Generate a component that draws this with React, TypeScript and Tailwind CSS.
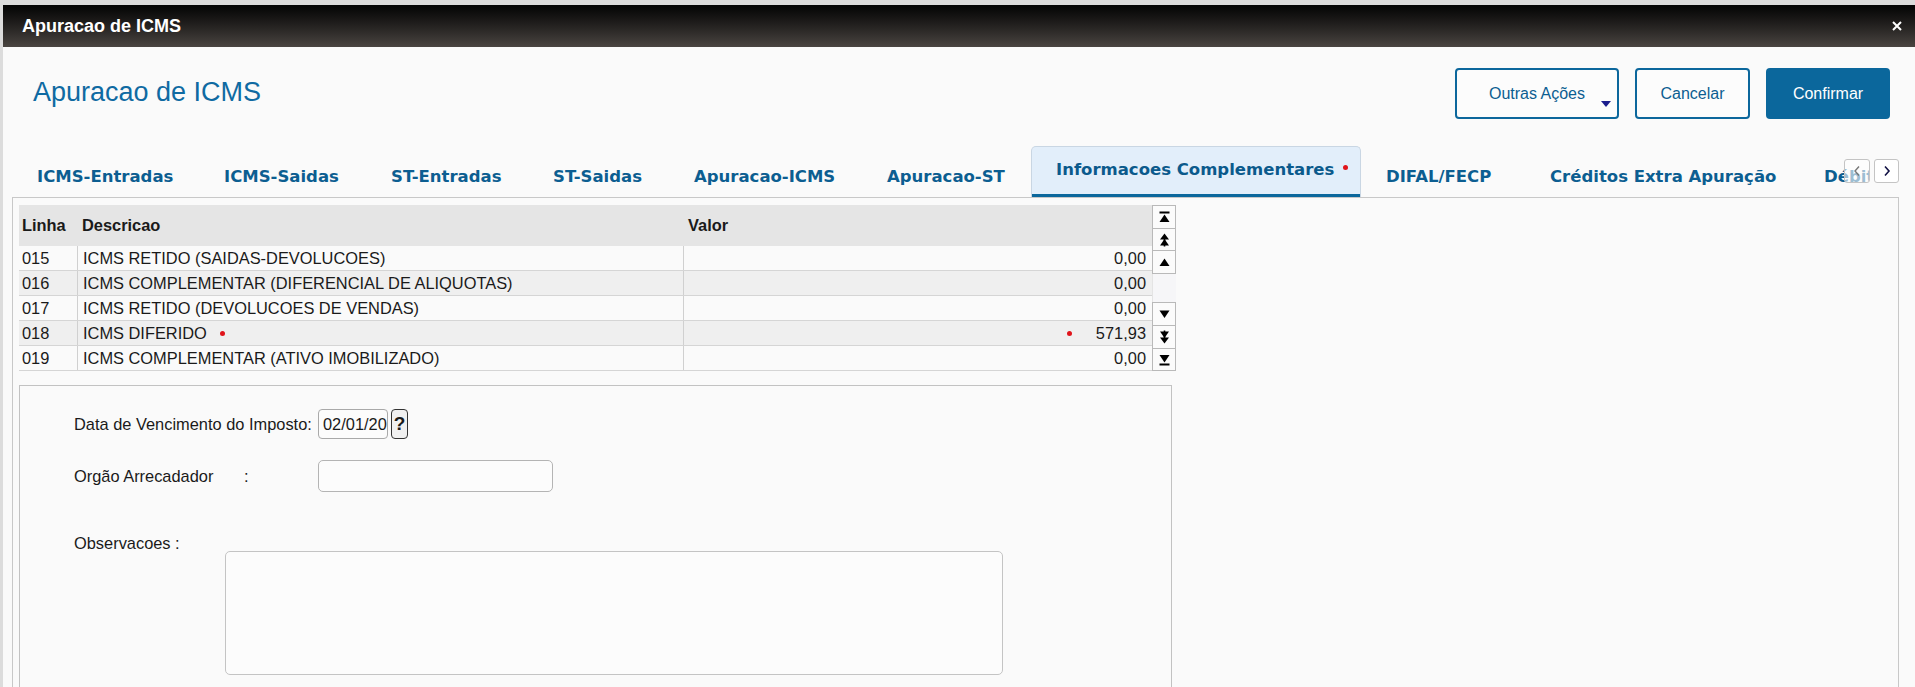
import React from "react";

const tabs = [
  { label: "ICMS-Entradas", w: "w-[187px]" },
  { label: "ICMS-Saidas", w: "w-[167px]" },
  { label: "ST-Entradas", w: "w-[162px]" },
  { label: "ST-Saidas", w: "w-[141px]" },
  { label: "Apuracao-ICMS", w: "w-[193px]" },
  { label: "Apuracao-ST", w: "w-[169px]" },
  { label: "Informacoes Complementares", w: "w-[330px]", active: true },
  { label: "DIFAL/FECP", w: "w-[164px]" },
  { label: "Créditos Extra Apuração", w: "w-[274px]" },
  { label: "Débitos Extra Apuração", w: "w-[260px]" },
];

const rows = [
  { linha: "015", desc: "ICMS RETIDO (SAIDAS-DEVOLUCOES)", valor: "0,00" },
  { linha: "016", desc: "ICMS COMPLEMENTAR (DIFERENCIAL DE ALIQUOTAS)", valor: "0,00" },
  { linha: "017", desc: "ICMS RETIDO (DEVOLUCOES DE VENDAS)", valor: "0,00" },
  { linha: "018", desc: "ICMS DIFERIDO", valor: "571,93", mark: true },
  { linha: "019", desc: "ICMS COMPLEMENTAR (ATIVO IMOBILIZADO)", valor: "0,00" },
];

function RedDot() {
  return <span className="inline-block w-[5px] h-[5px] rounded-full bg-[#e0141b]" />;
}

function ScrollIcon({ kind }: { kind: string }) {
  return (
    <svg width="11" height="14" viewBox="0 0 11 14" fill="#000">
      {kind === "first" && (
        <>
          <rect x="0.5" y="1.5" width="10" height="2" />
          <path d="M5.5 4.5 L10.5 12 H0.5 Z" />
        </>
      )}
      {kind === "pgup" && (
        <>
          <path d="M5.5 0.5 L10 6.5 H1 Z" />
          <path d="M5.5 6 L10 12.5 H1 Z" />
          <rect x="4.7" y="6" width="1.6" height="7.5" />
        </>
      )}
      {kind === "up" && <path d="M5.5 3.5 L10.5 11 H0.5 Z" />}
      {kind === "down" && <path d="M5.5 11 L10.5 3.5 H0.5 Z" />}
      {kind === "pgdn" && (
        <>
          <path d="M5.5 13.5 L10 7.5 H1 Z" />
          <path d="M5.5 8 L10 1.5 H1 Z" />
          <rect x="4.7" y="0.5" width="1.6" height="7.5" />
        </>
      )}
      {kind === "last" && (
        <>
          <path d="M5.5 9.5 L10.5 2 H0.5 Z" />
          <rect x="0.5" y="10.5" width="10" height="2" />
        </>
      )}
    </svg>
  );
}

function ScrollBtn({ kind, h }: { kind: string; h: string }) {
  return (
    <div className={`${h} flex items-center justify-center border border-[#b9b9b9] bg-[#fbfbfb] -mt-px first:mt-0`}>
      <ScrollIcon kind={kind} />
    </div>
  );
}

export default function App() {
  return (
    <div className="w-[1915px] h-[687px] overflow-hidden bg-[#dcdcdc] pt-[5px] pl-[3px] font-['Liberation_Sans',Arial,sans-serif] text-[#1a1a1a]">
      <div className="h-full flex flex-col bg-[#fafafa]">
        {/* title bar */}
        <div className="h-[42px] shrink-0 flex items-center justify-between bg-gradient-to-b from-[#050505] to-[#4a4541] pl-[19px] pr-[13px]">
          <span className="text-white font-bold text-[18px] leading-none">Apuracao de ICMS</span>
          <svg width="10" height="10" viewBox="0 0 10 10" stroke="#fff" strokeWidth="2">
            <path d="M1 1 L9 9 M9 1 L1 9" />
          </svg>
        </div>

        {/* header */}
        <div className="h-[99px] shrink-0 flex justify-between items-start pt-[21px] pl-[30px] pr-[25px]">
          <h1 className="mt-[9px] text-[27px] leading-[30px] text-[#0f6aa2]">Apuracao de ICMS</h1>
          <div className="flex gap-[16px] text-[16px]">
            <button className="relative w-[164px] h-[51px] rounded-[4px] border-2 border-[#0c679c] text-[#0c5e91] bg-[#fcfcfc]">
              Outras Ações
              <svg className="absolute right-[6px] bottom-[9px]" width="10" height="7" viewBox="0 0 10 7">
                <path d="M0 0 H10 L5 6 Z" fill="#1b1e8e" />
              </svg>
            </button>
            <button className="w-[115px] h-[51px] rounded-[4px] border-2 border-[#0c679c] text-[#0c5e91] bg-[#fcfcfc]">
              Cancelar
            </button>
            <button className="w-[124px] h-[51px] rounded-[4px] bg-[#0b679c] text-white">Confirmar</button>
          </div>
        </div>

        {/* tabs */}
        <div className="h-[51px] shrink-0 relative ml-[9px] mr-[16px]">
          <div className="flex h-full w-[1857px] overflow-hidden font-['DejaVu_Sans',Verdana,sans-serif] font-bold text-[16.5px] text-[#0c5e91]">
            {tabs.map((t) =>
              t.active ? (
                <div
                  key={t.label}
                  className={`${t.w} shrink-0 h-full flex items-center pl-[24px] pb-[4px] rounded-t-[5px] border border-b-0 border-[#c9d6e3] bg-[#e2eefa] shadow-[inset_0_-3px_0_#0b679c] text-[#0b5a8c]`}
                >
                  {t.label}
                  <span className="ml-[9px] -mt-[10px]">
                    <RedDot />
                  </span>
                </div>
              ) : (
                <div key={t.label} className={`${t.w} shrink-0 h-full flex items-center pl-[25px] pt-[11px] whitespace-nowrap`}>
                  {t.label}
                </div>
              )
            )}
          </div>
          <div className="absolute right-0 top-[13px] flex gap-[4px]">
            <div className="w-[26px] h-[24px] rounded-[3px] border border-[#c4c4c4] bg-white/60 flex items-center justify-center">
              <svg width="8" height="12" viewBox="0 0 8 12" fill="none" stroke="#777" strokeWidth="1.4">
                <path d="M6 1.5 L2 6 L6 10.5" />
              </svg>
            </div>
            <div className="w-[25px] h-[24px] rounded-[3px] border border-[#c4c4c4] bg-white flex items-center justify-center">
              <svg width="8" height="12" viewBox="0 0 8 12" fill="none" stroke="#111144" strokeWidth="1.6">
                <path d="M2 1.5 L6 6 L2 10.5" />
              </svg>
            </div>
          </div>
        </div>

        {/* panel */}
        <div className="flex-1 ml-[9px] mr-[16px] border-x border-t border-[#c8c8c8] pl-[6px] pt-[7px]">
          <div className="flex text-[16.4px]">
            <div className="w-[1133px]">
              <div className="h-[41px] flex items-center bg-[#e5e5e5] font-bold">
                <div className="w-[58px] pl-[3px]">Linha</div>
                <div className="w-[606px] pl-[5px]">Descricao</div>
                <div className="flex-1 pl-[5px]">Valor</div>
              </div>
              {rows.map((r, i) => (
                <div
                  key={r.linha}
                  className={`h-[25px] flex border-b border-[#d5d5d5] ${i % 2 === 1 ? "bg-[#efefef]" : "bg-[#fafafa]"}`}
                >
                  <div className="w-[58px] pl-[3px] flex items-center">{r.linha}</div>
                  <div className="w-[606px] pl-[5px] flex items-center border-l border-[#d0d0d0]">
                    {r.desc}
                    {r.mark && (
                      <span className="ml-[13px] flex">
                        <RedDot />
                      </span>
                    )}
                  </div>
                  <div className="flex-1 pr-[6px] flex items-center justify-end border-l border-[#d0d0d0]">
                    {r.mark && (
                      <span className="mr-[24px] flex">
                        <RedDot />
                      </span>
                    )}
                    {r.valor}
                  </div>
                </div>
              ))}
            </div>
            <div className="w-[24px] flex flex-col h-[166px]">
              <ScrollBtn kind="first" h="h-[24px]" />
              <ScrollBtn kind="pgup" h="h-[23px]" />
              <ScrollBtn kind="up" h="h-[24px]" />
              <div className="flex-1 bg-[#f6f6f8] border-l border-[#e4e4e4]" />
              <ScrollBtn kind="down" h="h-[24px]" />
              <ScrollBtn kind="pgdn" h="h-[24px]" />
              <ScrollBtn kind="last" h="h-[23px]" />
            </div>
          </div>

          {/* form */}
          <div className="mt-[14px] w-[1153px] h-[400px] border border-[#c2c2c2] pl-[54px] pt-[23px] text-[16.4px]">
            <div className="flex items-center h-[30px]">
              <span className="w-[244px] shrink-0">Data de Vencimento do Imposto:</span>
              <div className="w-[70px] h-[30px] rounded-[4px] border border-[#a9a9a9] bg-[#fcfcfc] pl-[4px] overflow-hidden whitespace-nowrap flex items-center">
                02/01/2024
              </div>
              <div className="ml-[3px] w-[17px] h-[30px] rounded-[4px] border border-[#333] bg-[#f0f0f0] flex items-center justify-center font-bold text-[19px]">
                ?
              </div>
            </div>
            <div className="flex items-center h-[32px] mt-[21px]">
              <span className="w-[170px] shrink-0">Orgão Arrecadador</span>
              <span className="w-[74px] shrink-0">:</span>
              <div className="w-[235px] h-[32px] rounded-[5px] border border-[#b4b4b4] bg-[#fcfcfc]" />
            </div>
            <div className="mt-[43px] leading-[16px]">Observacoes :</div>
            <div className="ml-[151px] w-[778px] h-[124px] rounded-[5px] border border-[#c4c4c4] bg-[#fcfcfc]" />
          </div>
        </div>
      </div>
    </div>
  );
}
